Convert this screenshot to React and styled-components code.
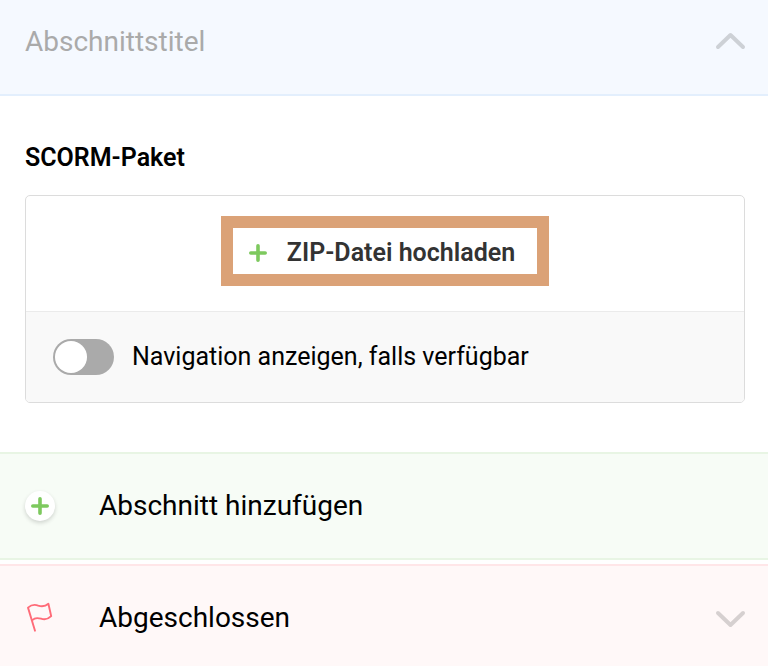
import React, { useState } from 'react'
import styled, { createGlobalStyle } from 'styled-components';

const GlobalStyle = createGlobalStyle`
  * {
    box-sizing: border-box;
  }

  body {
    margin: 0;
    background-color: #ffffff;
    color: #000000;
    font-family: Roboto, "Liberation Sans", sans-serif;
  }

  button, input {
    font-family: inherit;
  }
`;

const tones = {
  blue: { background: '#f5f9ff', border: '#e3effd' },
  green: { background: '#f7fcf6', border: '#e8f5e4' },
  red: { background: '#fff8f8', border: '#ffe6e8' },
};

const SectionHeader = styled.header`
  display: flex;
  align-items: center;
  gap: 24px;
  padding: 22px 22px 32px 25px;
  background-color: ${(props) => tones[props.$tone].background};
  border-bottom: 2px solid ${(props) => tones[props.$tone].border};
`;

const TitleInput = styled.input`
  flex: 1;
  min-width: 0;
  height: 40px;
  padding: 0;
  border: none;
  outline: none;
  background: transparent;
  color: #000000;
  font-size: 28px;
  line-height: 40px;

  &::placeholder {
    color: #aaaaaa;
    opacity: 1;
  }
`;

const IconButton = styled.button`
  display: flex;
  padding: 0;
  border: none;
  background: transparent;
  cursor: pointer;
`;

const Content = styled.main`
  padding: 46px 23px 49px 25px;
`;

const Heading = styled.h2`
  margin: 0 0 21px;
  font-size: 25px;
  line-height: 32px;
  font-weight: 600;
`;

const Card = styled.div`
  border: 1px solid #dcdcdc;
  border-radius: 5px;
  overflow: hidden;
`;

const UploadArea = styled.div`
  display: flex;
  justify-content: center;
  padding: 20px 0 25px;
`;

const UploadButton = styled.button`
  display: flex;
  align-items: center;
  gap: 20px;
  height: 70px;
  padding: 4px 22px 0 16px;
  border: 12px solid #dba277;
  background-color: #ffffff;
  color: #333333;
  font-size: 25px;
  line-height: 32px;
  font-weight: 600;
  cursor: pointer;
`;

const Options = styled.label`
  display: flex;
  align-items: center;
  gap: 18px;
  padding: 27px;
  border-top: 1px solid #ebebeb;
  background-color: #f9f9f9;
  font-size: 25px;
  line-height: 36px;
  cursor: pointer;
`;

const Switch = styled.input`
  appearance: none;
  flex: none;
  width: 61px;
  height: 36px;
  margin: 0;
  padding: 2px;
  border-radius: 18px;
  background-color: ${(props) => (props.checked ? '#7dc95e' : '#aaaaaa')};
  cursor: pointer;

  &::before {
    content: "";
    display: block;
    width: 32px;
    height: 32px;
    margin-left: ${(props) => (props.checked ? '25px' : '0')};
    border-radius: 50%;
    background-color: #ffffff;
  }
`;

const SectionList = styled.div`
  display: flex;
  flex-direction: column;
  gap: 4px;
`;

const SectionRow = styled.button`
  display: flex;
  align-items: center;
  width: 100%;
  height: 108px;
  padding: 0 22px 0 25px;
  border: solid ${(props) => tones[props.$tone].border};
  border-width: 2px 0;
  background-color: ${(props) => tones[props.$tone].background};
  color: #000000;
  font-size: 28px;
  line-height: 40px;
  text-align: left;
  cursor: pointer;
`;

const RowIcon = styled.span`
  display: flex;
  width: 74px;
`;

const RowTitle = styled.span`
  flex: 1;
`;

const Circle = styled.span`
  display: flex;
  align-items: center;
  justify-content: center;
  width: 30px;
  height: 30px;
  border-radius: 50%;
  background-color: #ffffff;
  box-shadow: 0 2px 4px rgba(0, 0, 0, 0.16);
`;

const Plus = () => (
  <svg width="18" height="18" viewBox="0 0 18 18" fill="none" stroke="#7dc95e" strokeWidth="3.6" strokeLinecap="round" aria-hidden="true">
    <path d="M9 1.8v14.4M1.8 9h14.4" />
  </svg>
);

const Chevron = ({ up }) => (
  <svg width="31" height="20" viewBox="0 0 31 20" fill="none" stroke="#000000" strokeOpacity="0.16" strokeWidth="4" strokeLinecap="round" strokeLinejoin="round" aria-hidden="true">
    <path d={up ? 'M3 15L15.5 3L28 15' : 'M3 5L15.5 17L28 5'} />
  </svg>
);

const Flag = () => (
  <svg width="30" height="32" viewBox="0 0 30 32" fill="none" stroke="#ff6b78" strokeWidth="1.9" strokeLinecap="round" strokeLinejoin="round" aria-hidden="true">
    <path d="M10 28.7L3 5.6C6.5 2.6 9.8 2.3 13.2 3.6C17 4.8 20.3 4.4 23.4 1.8L26.2 14.2C23 17.4 19.8 17.9 16 16.7C12.2 15.6 9.5 15.8 7.6 18" />
  </svg>
);

function App() {
  const [title, setTitle] = useState('');
  const [showNavigation, setShowNavigation] = useState(false);

  return (
    <>
        <GlobalStyle />
        <SectionHeader $tone="blue">
            <TitleInput
              aria-label="Abschnittstitel"
              placeholder="Abschnittstitel"
              value={title}
              onChange={(e) => setTitle(e.target.value)}
            />
            <IconButton type="button" aria-label="Abschnitt einklappen">
                <Chevron up />
            </IconButton>
        </SectionHeader>
        <Content>
            <Heading>SCORM-Paket</Heading>
            <Card>
                <UploadArea>
                    <UploadButton type="button">
                        <Plus />
                        ZIP-Datei hochladen
                    </UploadButton>
                </UploadArea>
                <Options>
                    <Switch
                      type="checkbox"
                      checked={showNavigation}
                      onChange={(e) => setShowNavigation(e.target.checked)}
                    />
                    Navigation anzeigen, falls verfügbar
                </Options>
            </Card>
        </Content>
        <SectionList>
            <SectionRow type="button" $tone="green">
                <RowIcon>
                    <Circle>
                        <Plus />
                    </Circle>
                </RowIcon>
                <RowTitle>Abschnitt hinzufügen</RowTitle>
            </SectionRow>
            <SectionRow type="button" $tone="red">
                <RowIcon>
                    <Flag />
                </RowIcon>
                <RowTitle>Abgeschlossen</RowTitle>
                <Chevron />
            </SectionRow>
        </SectionList>
    </>
  )
}

export default App
